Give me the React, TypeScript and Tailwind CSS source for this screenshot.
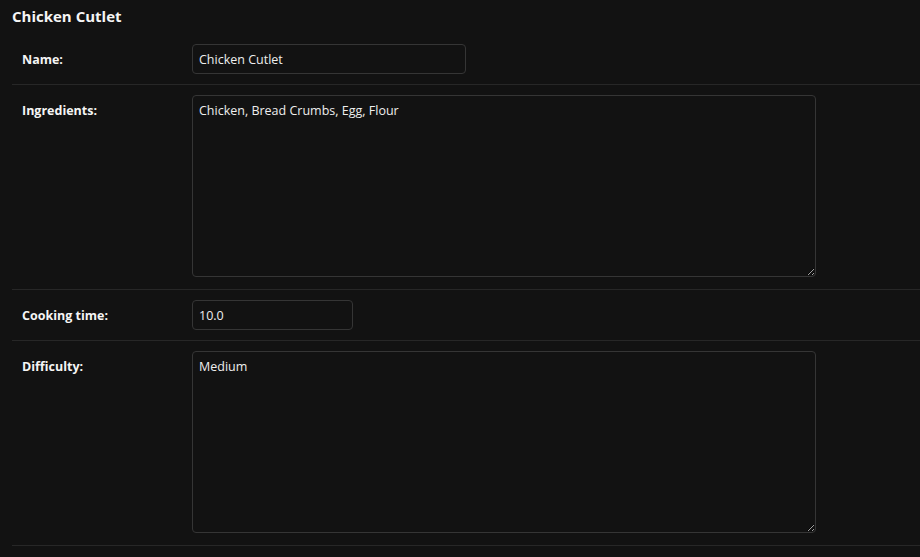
const font = { fontFamily: '"Open Sans", "Noto Sans", Arial, sans-serif' };

function Row({ label, children }: { label: string; children: React.ReactNode }) {
  return (
    <div className="flex border-b border-[#272727] px-[10px] py-[10px]">
      <label className="w-[170px] shrink-0 pt-[8px] text-[12.5px] leading-4 font-bold text-[#f5f5f5]">
        {label}
      </label>
      <div className="flex">{children}</div>
    </div>
  );
}

const inputCls =
  "h-[30px] rounded-[4px] border border-[#353535] bg-[#121212] px-[6px] pt-[1px] text-[12.5px] text-[#eeeeee] outline-none";
const areaCls =
  "mb-[2px] block h-[182px] w-[624px] rounded-[4px] border border-[#353535] bg-[#121212] px-[6px] py-[5px] text-[12.5px] leading-[20px] text-[#eeeeee] outline-none";

export default function App() {
  return (
    <div className="min-h-[557px] w-[920px] bg-[#121212] text-[#eeeeee] [color-scheme:dark]" style={font}>
      <h2 className="px-[12px] pt-[6px] pb-[8px] text-[15px] leading-5 font-bold text-[#f5f5f5]">
        Chicken Cutlet
      </h2>
      <div className="ml-[12px]">
        <Row label="Name:">
          <input readOnly defaultValue="Chicken Cutlet" className={inputCls + " w-[274px]"} style={font} />
        </Row>
        <Row label="Ingredients:">
          <textarea readOnly defaultValue="Chicken, Bread Crumbs, Egg, Flour" className={areaCls} style={font} />
        </Row>
        <Row label="Cooking time:">
          <input readOnly defaultValue="10.0" className={inputCls + " w-[161px]"} style={font} />
        </Row>
        <Row label="Difficulty:">
          <textarea readOnly defaultValue="Medium" className={areaCls} style={font} />
        </Row>
      </div>
    </div>
  );
}
